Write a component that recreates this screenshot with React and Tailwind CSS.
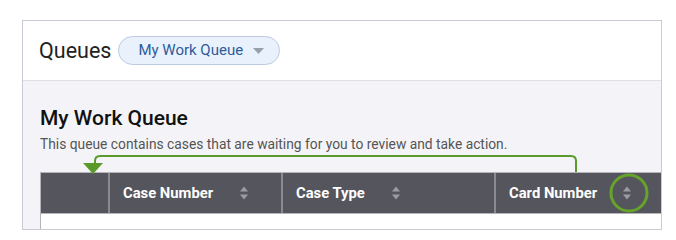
import React from "react";

function SortIcon({ className = "" }) {
  return (
    <svg width="10" height="16" viewBox="0 0 10 16" className={className}>
      <path d="M5 1.5 L9 6.5 L1 6.5 Z" fill="#9c9ca3" />
      <path d="M5 14.5 L9 9.5 L1 9.5 Z" fill="#9c9ca3" />
    </svg>
  );
}

export default function App() {
  const font = { fontFamily: "Roboto, 'Liberation Sans', sans-serif" };
  return (
    <div className="w-[676px] h-[240px] bg-white relative overflow-hidden" style={font}>
      <div className="ml-[22px] mt-[20px] w-[640px] h-[210px] border border-[#c9cad3] flex flex-col overflow-hidden">
        <div className="h-[60px] shrink-0 bg-white border-b border-[#dfdfe5] flex items-center pl-[16px] gap-[7px]">
          <span className="text-[21.5px] text-[#222] leading-none">Queues</span>
          <div className="h-[29px] w-[162px] rounded-full border border-[#bccbe0] bg-[#e9f1fc] flex items-center pl-[19px] gap-[10px]">
            <span className="text-[15px] text-[#2e5c9a] leading-none">My Work Queue</span>
            <svg width="11" height="6" viewBox="0 0 11 6">
              <path d="M0 0 L11 0 L5.5 6 Z" fill="#98a0ac" />
            </svg>
          </div>
        </div>
        <div className="flex-1 bg-[#f4f4f8] pl-[17px] pt-[25px]">
          <div className="text-[21px] text-[#111] leading-[25px] font-medium">My Work Queue</div>
          <div className="text-[13.8px] text-[#555] mt-[5px] leading-[16px] whitespace-nowrap">
            This queue contains cases that are waiting for you to review and take action.
          </div>
          <div className="mt-[20px] border-l border-t border-[#b4b4ba]">
            <div className="flex h-[41px] bg-[#55555d] text-white text-[14.8px] font-bold border-b border-[#b4b4ba]">
              <div className="w-[69px] border-r-2 border-[#8a8a91]"></div>
              <div className="w-[173px] border-r-2 border-[#8a8a91] flex items-center pl-[13px]">
                <span>Case Number</span>
                <SortIcon className="ml-[26px]" />
              </div>
              <div className="w-[213px] border-r-2 border-[#8a8a91] flex items-center pl-[13px]">
                <span>Case Type</span>
                <SortIcon className="ml-[26px]" />
              </div>
              <div className="flex-1 flex items-center pl-[13px]">
                <span>Card Number</span>
                <SortIcon className="ml-[25px]" />
              </div>
            </div>
            <div className="bg-white h-[20px]"></div>
          </div>
        </div>
      </div>
      <svg className="absolute left-0 top-0 pointer-events-none" width="676" height="240">
        <path
          d="M576 172 L576 161 Q576 156 571 156 L100 156 Q95 156 95 161 L95 165"
          fill="none"
          stroke="#5a9a2b"
          strokeWidth="2"
        />
        <path d="M83 163 L103 163 L93 174 Z" fill="#5a9a2b" />
        <circle cx="629" cy="193" r="18" fill="none" stroke="#66a32b" strokeWidth="3" />
      </svg>
    </div>
  );
}
